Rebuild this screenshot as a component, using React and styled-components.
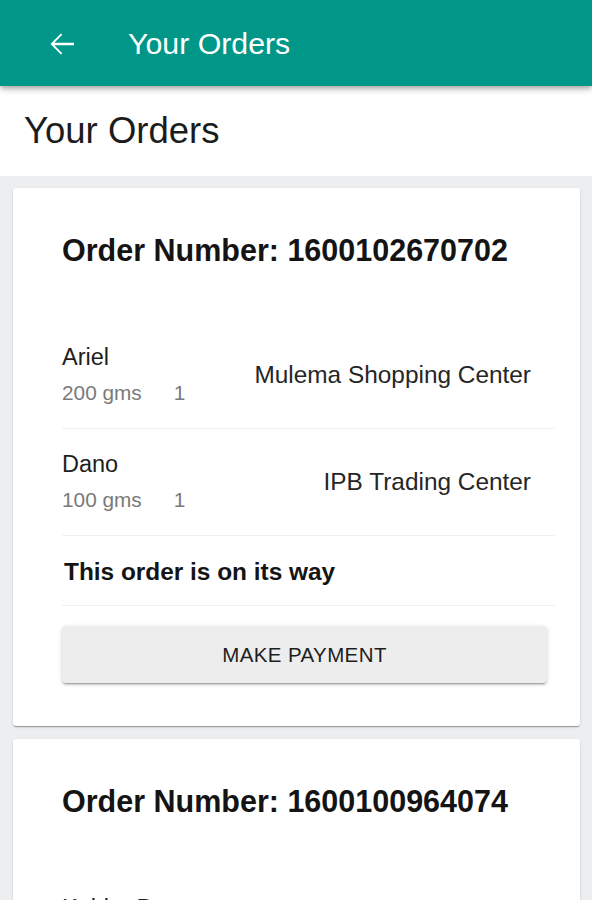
import React from "react";
import styled, { createGlobalStyle } from "styled-components";

const GlobalStyle = createGlobalStyle`
  body {
    margin: 0;
    background-color: #eceef0;
    font-family: "Liberation Sans", Arial, sans-serif;
    overflow: hidden;
  }
`;

const Page = styled.div`
  width: 592px;
  min-height: 900px;
  background-color: #eceef0;
`;

const AppBar = styled.header`
  position: relative;
  z-index: 2;
  height: 86px;
  padding: 1px 0 0 44px;
  box-sizing: border-box;
  display: flex;
  align-items: center;
  background-color: #009688;
  box-shadow: 0 2px 4px -1px rgba(0, 0, 0, 0.2), 0 4px 5px rgba(0, 0, 0, 0.14),
    0 1px 10px rgba(0, 0, 0, 0.12);
  color: white;
`;

const BackButton = styled.span`
  width: 36px;
  height: 36px;
  display: flex;
  margin-right: 48px;
`;

const BarTitle = styled.h1`
  margin: 0;
  font-size: 30.3px;
  font-weight: 400;
  line-height: 36px;
`;

const Section = styled.div`
  background-color: white;
  padding: 24px 24px;
`;

const SectionTitle = styled.h2`
  margin: 0;
  font-size: 36.5px;
  font-weight: 400;
  line-height: 42px;
  color: #1c1c1c;
`;

const List = styled.div`
  display: flex;
  flex-direction: column;
  gap: 13px;
  padding: 12px 12px 0 13px;
`;

const Card = styled.div`
  background-color: white;
  border-radius: 3px;
  padding: 44px 25px 43px 49px;
  box-shadow: 0 2px 1px -1px rgba(0, 0, 0, 0.2), 0 1px 1px rgba(0, 0, 0, 0.14),
    0 1px 3px rgba(0, 0, 0, 0.12);
`;

const OrderTitle = styled.h3`
  margin: 0 0 54px;
  font-size: 30.5px;
  font-weight: 700;
  line-height: 36px;
  color: #141414;
`;

const Item = styled.div`
  display: flex;
  align-items: center;
  justify-content: space-between;
  padding: 20px 24px 20px 0;
  border-bottom: 1px solid #f0f0f0;
`;

const ItemInfo = styled.div`
  display: flex;
  flex-direction: column;
`;

const ItemName = styled.span`
  font-size: 23.5px;
  line-height: 30px;
  color: #1e1e1e;
`;

const ItemMeta = styled.span`
  margin-top: 6px;
  font-size: 20.8px;
  line-height: 30px;
  color: #7a7a7a;
  display: flex;
  gap: 32px;
`;

const Shop = styled.span`
  font-size: 24.4px;
  line-height: 30px;
  color: #262626;
`;

const Status = styled.div`
  padding: 21px 0 18px 2px;
  font-size: 24.4px;
  font-weight: 700;
  line-height: 30px;
  color: #141414;
  border-bottom: 1px solid #f0f0f0;
`;

const PayButton = styled.button`
  display: block;
  width: calc(100% - 8px);
  height: 57px;
  margin-top: 20px;
  border: none;
  border-radius: 4px;
  background-color: #ededed;
  font-family: "Liberation Sans", Arial, sans-serif;
  font-size: 20.5px;
  letter-spacing: 0.4px;
  color: #1e1e1e;
  text-transform: uppercase;
  box-shadow: 0 3px 1px -2px rgba(0, 0, 0, 0.2), 0 2px 2px rgba(0, 0, 0, 0.14),
    0 1px 5px rgba(0, 0, 0, 0.12);
`;

const orders = [
  {
    id: "1600102670702",
    items: [
      { name: "Ariel", weight: "200 gms", qty: 1, shop: "Mulema Shopping Center" },
      { name: "Dano", weight: "100 gms", qty: 1, shop: "IPB Trading Center" },
    ],
    status: "This order is on its way",
  },
  {
    id: "1600100964074",
    items: [
      { name: "Kabba Beans", weight: "500 gms", qty: 1, shop: "Mulema Shopping Center" },
    ],
    status: "This order is on its way",
  },
];

function ArrowBack() {
  return (
    <svg width="36" height="36" viewBox="0 0 24 24" fill="white">
      <path d="M20 11.2H6.9l5.3-5.3L11.3 5l-7 7 7 7 .9-.9-5.3-5.3H20v-1.6z" />
    </svg>
  );
}

function App() {
  return (
    <Page>
      <GlobalStyle />
      <AppBar>
        <BackButton>
          <ArrowBack />
        </BackButton>
        <BarTitle>Your Orders</BarTitle>
      </AppBar>
      <Section>
        <SectionTitle>Your Orders</SectionTitle>
      </Section>
      <List>
        {orders.map((order) => (
          <Card key={order.id}>
            <OrderTitle>Order Number: {order.id}</OrderTitle>
            {order.items.map((item) => (
              <Item key={item.name}>
                <ItemInfo>
                  <ItemName>{item.name}</ItemName>
                  <ItemMeta>
                    <span>{item.weight}</span>
                    <span>{item.qty}</span>
                  </ItemMeta>
                </ItemInfo>
                <Shop>{item.shop}</Shop>
              </Item>
            ))}
            <Status>{order.status}</Status>
            <PayButton>Make Payment</PayButton>
          </Card>
        ))}
      </List>
    </Page>
  );
}

export default App;
